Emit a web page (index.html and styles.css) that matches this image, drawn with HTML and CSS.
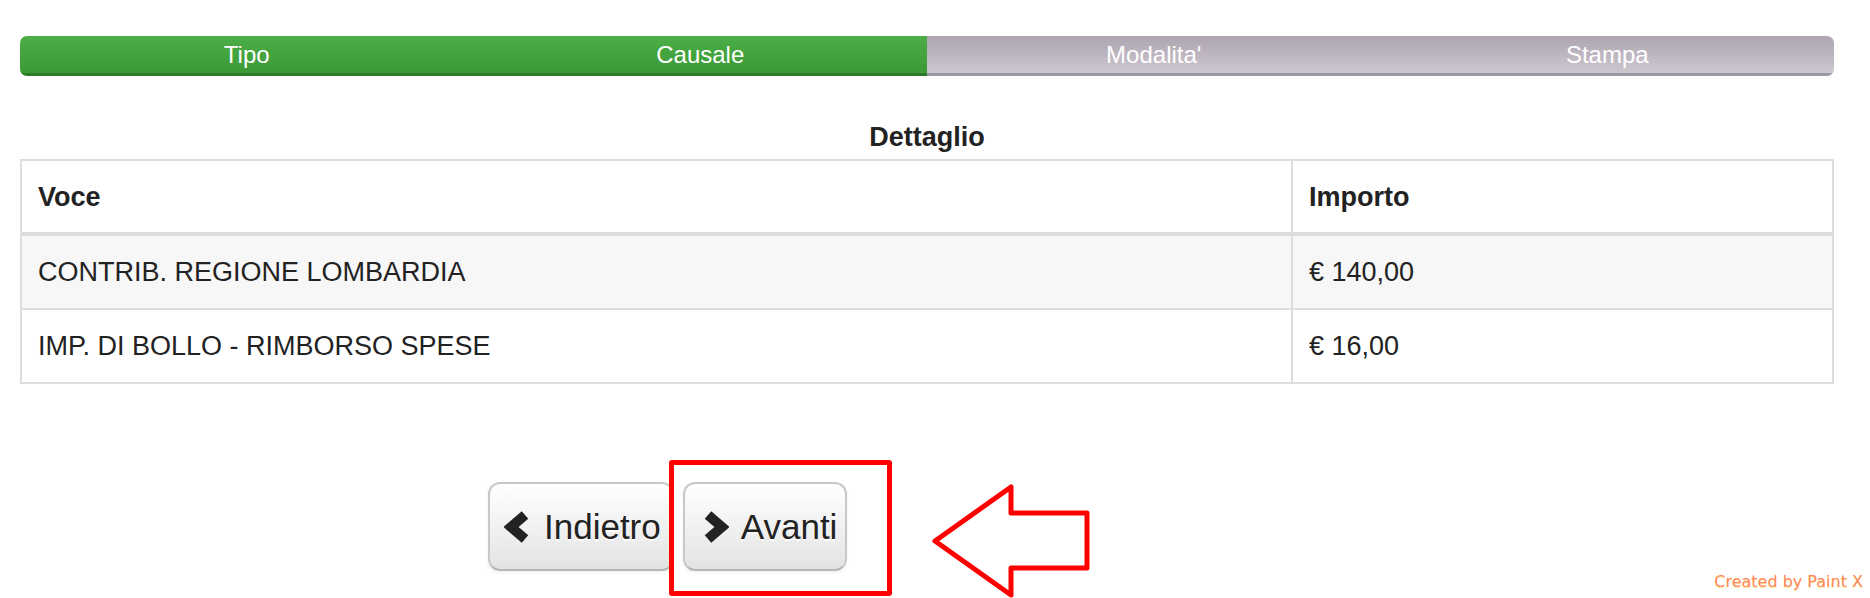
FILE: index.html
```html
<!DOCTYPE html>
<html>
<head>
  <title>Pagamento - Dettaglio</title>
  <link rel="stylesheet" href="styles.css">
</head>
<body>
  <div class="page">
    <div class="steps">
      <div class="step done">Tipo</div>
      <div class="step done">Causale</div>
      <div class="step">Modalita'</div>
      <div class="step">Stampa</div>
    </div>

    <h3 class="title">Dettaglio</h3>
    <table class="details">
      <thead>
        <tr>
          <th class="col-voce">Voce</th>
          <th>Importo</th>
        </tr>
      </thead>
      <tbody>
        <tr class="odd">
          <td>CONTRIB. REGIONE LOMBARDIA</td>
          <td>€ 140,00</td>
        </tr>
        <tr>
          <td>IMP. DI BOLLO - RIMBORSO SPESE</td>
          <td>€ 16,00</td>
        </tr>
      </tbody>
    </table>

    <div class="actions">
      <button class="btn btn-back">
        <svg class="icon" width="28" height="32" viewBox="0 0 28 32"><polyline points="21,4 7,16 21,28" /></svg>
        Indietro
      </button>
      <button class="btn btn-next">
        <svg class="icon" width="28" height="32" viewBox="0 0 28 32"><polyline points="7,4 21,16 7,28" /></svg>
        Avanti
      </button>
    </div>

    <!-- annotazioni disegnate sopra lo screenshot -->
    <div class="mark-box"></div>
    <svg class="mark-arrow" width="170" height="120" viewBox="0 0 170 120">
      <polygon points="5,59 81,5 81,31 157,31 157,86 81,86 81,113" />
    </svg>
    <div class="credit">Created by Paint X</div>
  </div>
</body>
</html>
```

FILE: styles.css
```css
body {
  margin: 0;
  font-family: "Liberation Sans", Arial, sans-serif;
  color: #222;
  background: #fff;
}

.page {
  position: relative;
  padding: 36px 36px 0 20px;
  height: 562px;
}

/* barra dei passi */
.steps {
  display: flex;
  height: 40px;
  border-radius: 7px;
  overflow: hidden;
}

.step {
  flex: 1;
  text-align: center;
  color: #fff;
  font-size: 24px;
  line-height: 37px;
  background: linear-gradient(#ada5b0, #cdc7d0);
  border-bottom: 3px solid #9d99a1;
}

.step.done {
  background: linear-gradient(#4cae46, #3b9a36);
  border-bottom-color: #2d7a2a;
}

.title {
  margin: 41px 0 2px;
  text-align: center;
  font-size: 27px;
  line-height: 40px;
}

/* tabella dettaglio */
.details {
  width: 100%;
  border-collapse: collapse;
  font-size: 27px;
}

.details th,
.details td {
  border: 2px solid #ddd;
  text-align: left;
  line-height: 40px;
  padding: 16px;
}

.details th {
  padding: 16px 16px 15px;
  border-bottom-width: 4px;
}

.details .col-voce {
  width: 1237px;
}

.details tr.odd td {
  background: #f7f7f7;
}

/* pulsanti */
.actions {
  display: flex;
  gap: 9px;
  margin: 98px 0 0 468px;
}

.btn {
  display: flex;
  align-items: center;
  height: 89px;
  font-family: "Liberation Sans", Arial, sans-serif;
  font-size: 35px;
  color: #222;
  text-shadow: 0 2px 1px rgba(255, 255, 255, 0.8);
  background: linear-gradient(#ffffff, #e3e3e3);
  border: 2px solid #c8c8c8;
  border-bottom-color: #b5b5b5;
  border-radius: 12px;
  box-shadow: 0 2px 4px rgba(0, 0, 0, 0.06);
  cursor: pointer;
}

.btn-back {
  padding: 0 11px 0 14px;
}

.btn-next {
  padding: 0 8px 0 16px;
}

.icon {
  margin-right: 12px;
}

.icon polyline {
  fill: none;
  stroke: #222;
  stroke-width: 10;
  stroke-linejoin: miter;
}

.mark-box {
  position: absolute;
  left: 669px;
  top: 460px;
  width: 213px;
  height: 126px;
  border: 5px solid #ff0000;
  border-radius: 3px;
}

.mark-arrow {
  position: absolute;
  left: 930px;
  top: 482px;
}

.mark-arrow polygon {
  fill: none;
  stroke: #ff0000;
  stroke-width: 5;
  stroke-linejoin: round;
}

.credit {
  position: absolute;
  right: 7px;
  top: 572px;
  font-family: "DejaVu Sans", Verdana, sans-serif;
  font-size: 16px;
  color: #ff8660;
  text-shadow: 0 1px 0 #fff2a0;
}
```
